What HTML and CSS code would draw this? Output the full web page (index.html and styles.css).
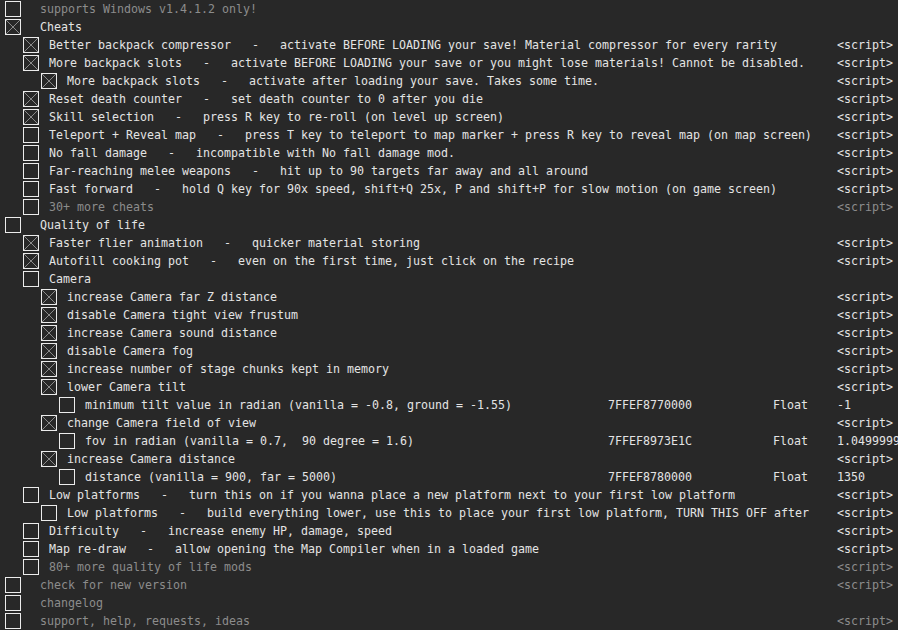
FILE: index.html
```html
<!DOCTYPE html>
<html lang="en">
<head>
  <meta charset="UTF-8">
  <meta name="viewport" content="width=device-width, initial-scale=1.0">
  <title>cheat table</title>
  <link rel="stylesheet" href="styles.css">
</head>
<body>
  <div id="table" class="table"></div>

<script type="text/javascript">
  const PAGE = {
    data: {
      rows: [
        { level: 0, text: 'supports Windows v1.4.1.2 only!', dim: true },
        { level: 0, text: 'Cheats', checked: true },
        { level: 1, text: 'Better backpack compressor   -   activate BEFORE LOADING your save! Material compressor for every rarity', checked: true, value: '<script>' },
        { level: 1, text: 'More backpack slots   -   activate BEFORE LOADING your save or you might lose materials! Cannot be disabled.', checked: true, value: '<script>' },
        { level: 2, text: 'More backpack slots   -   activate after loading your save. Takes some time.', checked: true, value: '<script>' },
        { level: 1, text: 'Reset death counter   -   set death counter to 0 after you die', checked: true, value: '<script>' },
        { level: 1, text: 'Skill selection   -   press R key to re-roll (on level up screen)', checked: true, value: '<script>' },
        { level: 1, text: 'Teleport + Reveal map   -   press T key to teleport to map marker + press R key to reveal map (on map screen)', value: '<script>' },
        { level: 1, text: 'No fall damage   -   incompatible with No fall damage mod.', value: '<script>' },
        { level: 1, text: 'Far-reaching melee weapons   -   hit up to 90 targets far away and all around', value: '<script>' },
        { level: 1, text: 'Fast forward   -   hold Q key for 90x speed, shift+Q 25x, P and shift+P for slow motion (on game screen)', value: '<script>' },
        { level: 1, text: '30+ more cheats', dim: true, value: '<script>' },
        { level: 0, text: 'Quality of life' },
        { level: 1, text: 'Faster flier animation   -   quicker material storing', checked: true, value: '<script>' },
        { level: 1, text: 'Autofill cooking pot   -   even on the first time, just click on the recipe', checked: true, value: '<script>' },
        { level: 1, text: 'Camera' },
        { level: 2, text: 'increase Camera far Z distance', checked: true, value: '<script>' },
        { level: 2, text: 'disable Camera tight view frustum', checked: true, value: '<script>' },
        { level: 2, text: 'increase Camera sound distance', checked: true, value: '<script>' },
        { level: 2, text: 'disable Camera fog', checked: true, value: '<script>' },
        { level: 2, text: 'increase number of stage chunks kept in memory', checked: true, value: '<script>' },
        { level: 2, text: 'lower Camera tilt', checked: true, value: '<script>' },
        { level: 3, text: 'minimum tilt value in radian (vanilla = -0.8, ground = -1.55)', address: '7FFEF8770000', type: 'Float', value: '-1' },
        { level: 2, text: 'change Camera field of view', checked: true, value: '<script>' },
        { level: 3, text: 'fov in radian (vanilla = 0.7,  90 degree = 1.6)', address: '7FFEF8973E1C', type: 'Float', value: '1.049999952' },
        { level: 2, text: 'increase Camera distance', checked: true, value: '<script>' },
        { level: 3, text: 'distance (vanilla = 900, far = 5000)', address: '7FFEF8780000', type: 'Float', value: '1350' },
        { level: 1, text: 'Low platforms   -   turn this on if you wanna place a new platform next to your first low platform', value: '<script>' },
        { level: 2, text: 'Low platforms   -   build everything lower, use this to place your first low platform, TURN THIS OFF after', value: '<script>' },
        { level: 1, text: 'Difficulty   -   increase enemy HP, damage, speed', value: '<script>' },
        { level: 1, text: 'Map re-draw   -   allow opening the Map Compiler when in a loaded game', value: '<script>' },
        { level: 1, text: '80+ more quality of life mods', dim: true, value: '<script>' },
        { level: 0, text: 'check for new version', dim: true, value: '<script>' },
        { level: 0, text: 'changelog', dim: true },
        { level: 0, text: 'support, help, requests, ideas', dim: true, value: '<script>' }
      ]
    },
    init: function() {
        this.render();
    },
    escape: function(str) {
        return (str || '').replace(/</g, '&lt;').replace(/>/g, '&gt;');
    },
    render: function() {
        let rows = this.data.rows;
        let html = rows.map((data) => {
          return `
            <div class="row lv-${data.level} ${data.dim ? 'dim' : ''}">
              <div class="row-desc">
                <span class="check ${data.checked ? 'checked' : ''}"></span>
                <span class="row-text">${this.escape(data.text)}</span>
              </div>
              <div class="row-address">${data.address || ''}</div>
              <div class="row-type">${data.type || ''}</div>
              <div class="row-value">${this.escape(data.value)}</div>
            </div>
          `
        }).join('');
        document.getElementById('table').innerHTML = html;
    }
  }

  PAGE.init();
</script>
</body>
</html>
```

FILE: styles.css
```css
*{
  margin: 0;
  padding: 0;
  box-sizing: border-box;
}
html, body{
  width: 100%;
  height: 100%;
  overflow: hidden;
  background: #282828;
}
.table{
  font-family: "DejaVu Sans Mono", "Liberation Mono", monospace;
  font-size: 11.63px;
  line-height: 18px;
  color: #e4e4e4;
}
.row{
  display: grid;
  grid-template-columns: 608px 165px 64px 1fr;
  height: 18px;
  white-space: pre;
}
.row.dim{
  color: #8c8c8c;
}
.row-desc{
  display: flex;
  align-items: center;
  padding-left: 5px;
  min-width: 0;
  overflow: visible;
}
.lv-1 .row-desc{ padding-left: 23px; }
.lv-2 .row-desc{ padding-left: 41px; }
.lv-3 .row-desc{ padding-left: 59px; }
.check{
  flex: none;
  width: 16px;
  height: 16px;
  border: 1px solid #ececec;
  margin-right: 10px;
}
.lv-0 .check{
  margin-right: 19px;
}
.check.checked{
  background:
    linear-gradient(45deg, transparent calc(50% - 0.6px), #8a8a8a 50%, transparent calc(50% + 0.6px)),
    linear-gradient(-45deg, transparent calc(50% - 0.6px), #8a8a8a 50%, transparent calc(50% + 0.6px));
}
.row-value{
  overflow: hidden;
}
```
